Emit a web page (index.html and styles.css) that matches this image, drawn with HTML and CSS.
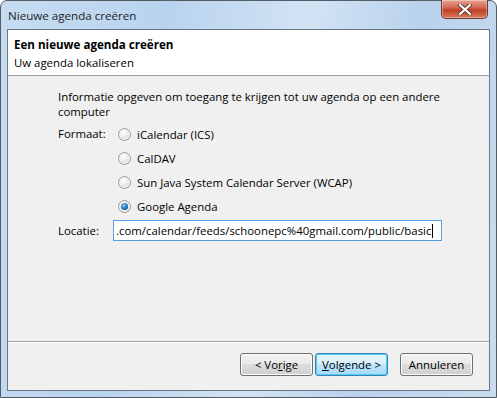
FILE: index.html
```html
<!DOCTYPE html>
<html lang="nl">
<head>
    <meta charset="UTF-8">
    <title>Nieuwe agenda creëren</title>
    <link rel="stylesheet" href="styles.css">
</head>
<body>
    <div class="venster">
        <div class="titelbalk">
            <span class="titel">Nieuwe agenda creëren</span>
            <button class="sluiten" aria-label="Sluiten">
                <svg width="14" height="11" viewBox="0 0 14 11">
                    <path d="M2 1 L12 10 M12 1 L2 10" stroke="#5a3a34" stroke-width="4" stroke-linecap="round"/>
                    <path d="M2 1 L12 10 M12 1 L2 10" stroke="#fff" stroke-width="2.2" stroke-linecap="round"/>
                </svg>
            </button>
        </div>

        <div class="client">
            <div class="kop">
                <h1>Een nieuwe agenda creëren</h1>
                <p>Uw agenda lokaliseren</p>
            </div>

            <div class="inhoud">
                <p class="uitleg">Informatie opgeven om toegang te krijgen tot uw agenda op een andere computer</p>

                <div class="rij">
                    <span class="label">Formaat:</span>
                    <div class="keuzes">
                        <label class="keuze"><span class="radio"></span>iCalendar (ICS)</label>
                        <label class="keuze"><span class="radio"></span>CalDAV</label>
                        <label class="keuze"><span class="radio"></span>Sun Java System Calendar Server (WCAP)</label>
                        <label class="keuze"><span class="radio aan"></span>Google Agenda</label>
                    </div>
                </div>

                <div class="rij locatie">
                    <span class="label kort">Locatie:</span>
                    <div class="veld"><span class="waarde">.com/calendar/feeds/schoonepc%40gmail.com/public/basic</span><span class="cursor"></span></div>
                </div>
            </div>

            <div class="knoppen">
                <button class="knop">&lt; Vo<u>r</u>ige</button>
                <button class="knop standaard"><u>V</u>olgende &gt;</button>
                <button class="knop annuleren">Annuleren</button>
            </div>
        </div>
    </div>
</body>
</html>
```

FILE: styles.css
```css
body {
    margin: 0;
    padding: 0;
    font-family: "Open Sans", "Noto Sans", Arial, sans-serif;
    font-size: 11.4px;
    color: #000;
    background-color: #fff;
}

.venster {
    width: 497px;
    height: 398px;
    box-sizing: border-box;
    border: 1px solid #545c66;
    border-radius: 7px 7px 0 0;
    background: linear-gradient(100deg, #c6dcf1 0%, #b9d3ee 30%, #d2e3f4 55%, #b9d2ec 75%, #c9dcf0 100%);
    padding: 0 6px 6px 6px;
    display: flex;
    flex-direction: column;
}

.titelbalk {
    height: 28px;
    display: flex;
    align-items: flex-start;
    justify-content: space-between;
}

.titel {
    margin: 7px 0 0 1px;
    font-size: 11.6px;
    color: #1e1e1e;
}

.sluiten {
    width: 47px;
    height: 19px;
    margin: -1px 2px 0 0;
    border: 1px solid #6b3a2f;
    border-top: none;
    border-radius: 0 0 5px 5px;
    background: linear-gradient(#e8a290 0%, #d2634c 45%, #c13f25 55%, #d77a5c 100%);
    box-shadow: inset 0 0 0 1px rgba(255, 255, 255, 0.35);
    display: flex;
    align-items: center;
    justify-content: center;
    padding: 0;
}

.client {
    flex: 1;
    border: 1px solid #6a7585;
    background-color: #f0f0f0;
    display: flex;
    flex-direction: column;
}

.kop {
    height: 46px;
    background-color: #fff;
    border-bottom: 1px solid #a0a0a0;
    padding: 6px 0 0 6px;
    box-sizing: border-box;
}

.kop h1 {
    margin: 0;
    font-size: 11.6px;
    font-weight: bold;
    line-height: 18px;
}

.kop p {
    margin: 0;
    line-height: 18px;
}

.inhoud {
    flex: 1;
    padding: 13px 30px 0 50px;
}

.uitleg {
    margin: 0 0 6px 0;
    line-height: 15px;
}

.rij {
    display: flex;
}

.label {
    width: 60px;
    flex-shrink: 0;
    line-height: 18px;
}

.label.kort {
    width: 55px;
}

.keuzes {
    display: flex;
    flex-direction: column;
    gap: 6px;
}

.keuze {
    display: flex;
    align-items: center;
    height: 18px;
    gap: 6px;
}

.radio {
    width: 11px;
    height: 11px;
    border-radius: 50%;
    border: 1px solid #9a9a9a;
    background: radial-gradient(circle at 40% 35%, #ffffff 0%, #e8e8e8 50%, #cfcfcf 100%);
    box-shadow: inset 0 0 0 1px #f4f4f4;
    position: relative;
}

.radio.aan::after {
    content: "";
    position: absolute;
    left: 2px;
    top: 2px;
    width: 7px;
    height: 7px;
    border-radius: 50%;
    background: radial-gradient(circle at 40% 35%, #7fd0f5 0%, #1a73b8 55%, #0c4a82 100%);
}

.locatie {
    margin-top: 5px;
    align-items: center;
}

.veld {
    width: 325px;
    height: 19px;
    border: 1px solid #569de5;
    background-color: #fff;
    overflow: hidden;
    display: flex;
    align-items: center;
    white-space: nowrap;
    padding-left: 2px;
    box-sizing: content-box;
}

.cursor {
    width: 1px;
    height: 14px;
    background-color: #000;
    margin-left: 1px;
    flex-shrink: 0;
}

.knoppen {
    border-top: 1px solid #a0a0a0;
    box-shadow: inset 0 1px 0 #fff;
    height: 49px;
    box-sizing: border-box;
    padding: 11px 16px 0 0;
    display: flex;
    justify-content: flex-end;
    gap: 2px;
}

.knop {
    width: 73px;
    height: 23px;
    border: 1px solid #707070;
    border-radius: 3px;
    background: linear-gradient(#f2f2f2 0%, #ebebeb 45%, #dddddd 50%, #cfcfcf 100%);
    box-shadow: inset 0 0 0 1px #fcfcfc;
    font-family: inherit;
    font-size: 11.4px;
    color: #000;
    padding: 0;
}

.standaard {
    border-color: #3c7fb1;
    background: linear-gradient(#eaf6fd 0%, #d9f0fc 45%, #bee6fd 50%, #a7d9f5 100%);
    box-shadow: inset 0 0 0 1px #48d2fb;
}

.annuleren {
    margin-left: 10px;
}
```
